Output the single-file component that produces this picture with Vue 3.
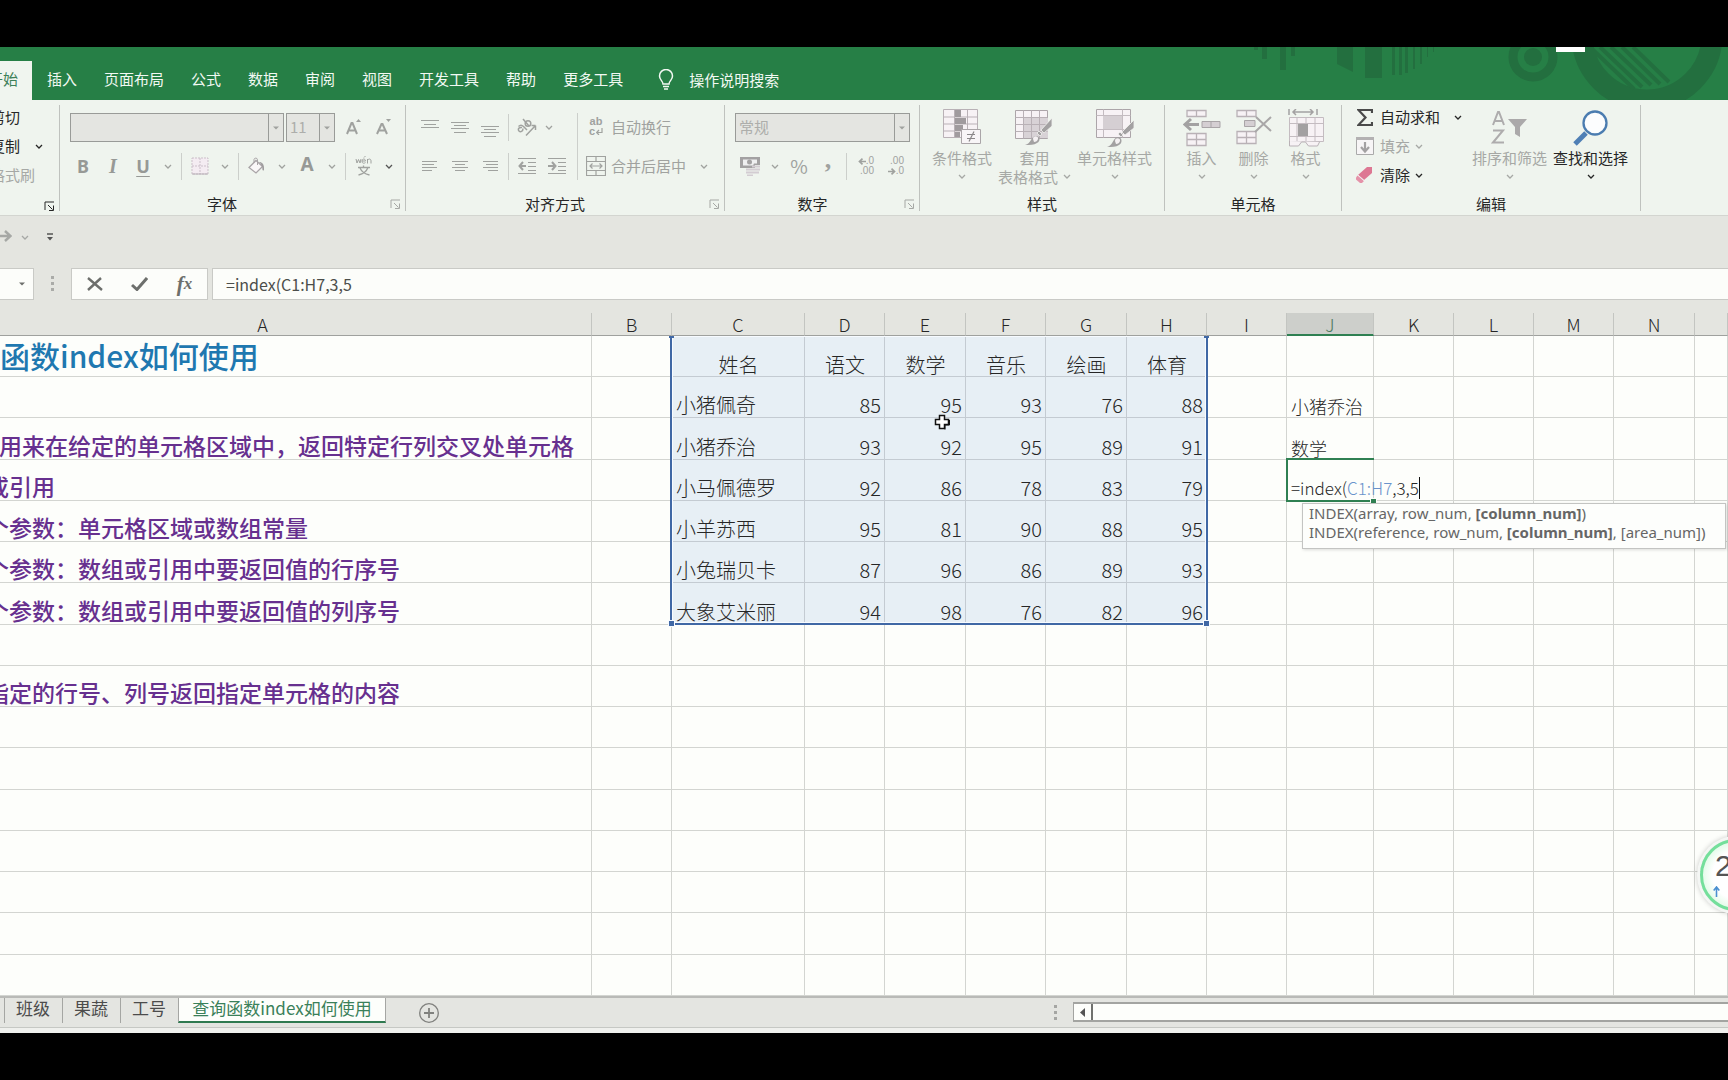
<script setup>
import { h } from 'vue'

const glyphs = {
  caret: [8, 5, '<path d="M1 1l3 3 3-3" fill="none" stroke="currentColor" stroke-width="1.3"/>'],
  drop: [6, 4, '<path d="M0 .5h6l-3 3z" fill="currentColor"/>'],
  launcher: [11, 10, '<path d="M1 9V1h9M4 4l4.500 4.500M9.500 4.500v5H5" fill="none" stroke="currentColor"/>'],
  bulb: [16, 22, '<path d="M5 15c0-3-3.500-4-3.500-8a6.500 6.500 0 0 1 13 0c0 4-3.500 5-3.500 8z" fill="none" stroke="currentColor" stroke-width="1.500"/><path d="M5 17.500h6M6 20h4" stroke="currentColor" stroke-width="1.500"/>'],
  grow: [16, 16, '<path d="M1 15L5.500 4h1L11 15M3 11.500h6" fill="none" stroke="currentColor" stroke-width="2"/><path d="M10 3l2.500-3L15 3z" fill="currentColor"/>'],
  shrink: [16, 16, '<path d="M1 15L5.500 5h1L11 15M3 11.500h6" fill="none" stroke="currentColor" stroke-width="2"/><path d="M10 0h5l-2.500 3z" fill="currentColor"/>'],
  border: [18, 18, '<path d="M1 1h16v16H1zM9 1v16M1 9h16" fill="#f4ecf2" stroke="#cbbfc9" stroke-dasharray="2 1"/><path d="M1 17h16" stroke="#b9b0b7"/>'],
  bucket: [18, 18, '<path d="M1 10.500L8 3.500l6.500 6L8 16z" fill="#faf7f8" stroke="#a9a4a7" stroke-width="1.300"/><path d="M6 6V2.500a1.800 1.800 0 0 1 3.500 0V8" fill="none" stroke="#a9a4a7"/><path d="M11 5c3 0 5.500 2 5 8-.5 1-1.500.6-1.600-.4.2-3-.8-5-3.400-7.600z" fill="#9f9c9e"/>'],
  wen: [18, 20, '<path d="M8.500 9.500v2M3 11.500h12M13 11.500c-1.500 4-5 6.500-9.500 7.500M5 12c1.500 3.500 5 6 9.500 7" fill="none" stroke="currentColor" stroke-width="1.300"/><path d="M1 3l1 4 1.500-3.500L5 7l1-4M7 5h3.500c0-2.600-3.500-2.600-3.500 0s2 2.600 3.500 1.600M9 1.500L10.500 0M12.500 7.500V3M12.500 4.500c1-2 3.500-2 3.500.500v2.500" fill="none" stroke="currentColor"/>'],
  top: [18, 20, '<path d="M0 3.500h18M3 7.500h12M0 10.500h18" stroke="currentColor"/>'],
  middle: [18, 20, '<path d="M0 5.500h18M3 8.500h12M0 11.500h18M3 15.500h12" stroke="currentColor"/>'],
  bottom: [18, 20, '<path d="M0 9.500h18M3 12.500h12M0 15.500h18M3 19.500h12" stroke="currentColor"/>'],
  left: [16, 12, '<path d="M0 1.500h15M0 4.500h12M0 7.500h15M0 10.500h10" stroke="currentColor"/>'],
  center: [16, 12, '<path d="M0 1.500h16M3 4.500h10M0 7.500h16M3 10.500h10" stroke="currentColor"/>'],
  right: [16, 12, '<path d="M1 1.500h15M4 4.500h12M1 7.500h15M6 10.500h10" stroke="currentColor"/>'],
  outdent: [18, 18, '<path d="M0 1.500h18M10 5.500h8M10 9.500h8M10 13.500h8M0 16.500h18" stroke="currentColor"/><path d="M8 9H2M5 5L1.500 9 5 13" fill="none" stroke="currentColor" stroke-width="2"/>'],
  indent: [18, 18, '<path d="M0 1.500h18M10 5.500h8M10 9.500h8M10 13.500h8M0 16.500h18" stroke="currentColor"/><path d="M0 9h6M4 5l3.500 4L4 13" fill="none" stroke="currentColor" stroke-width="2"/>'],
  merge: [20, 20, '<path d="M.5.5h19v19H.5zM.5 5.500h19M.5 14.500h19M10 .5v5M10 14.500v5M4 10h12M6.500 7.500L4 10l2.500 2.500M13.500 7.500L16 10l-2.500 2.500" fill="none" stroke="currentColor" stroke-width="1.200"/>'],
  slant: [20, 18, '<path d="M9 17.500L18 8M18.500 7.500h-4M18.500 7.500V12" fill="none" stroke="currentColor" stroke-width="1.500"/><g fill="none" stroke="currentColor" stroke-width="1.500"><path d="M1.500 8.500c2-2 3.500-1.500 5 0L10 12M5 9.500c-3-.5-4.500 1.500-3 3.500 1.500 1.500 4 .5 4-2.500"/><path d="M6 1l6 7"/><circle cx="11" cy="5.500" r="2.800"/></g>'],
  money: [20, 20, '<path d="M0 1h20v8h-5v3H0z" fill="#a3a1a2"/><path d="M3 3.500h14v4H14l-1 2H3z" fill="#efeff0"/><circle cx="9.500" cy="6" r="2.500" fill="#a3a1a2"/><path d="M12 10.500h8M12 13.500h8M6 13.500h7M6 16.500h7M12 16.500h7M7 19.500h6" stroke="#d3ccd2" stroke-width="2"/>'],
  wrap: [7, 7, '<path d="M6 0v4.500H1M3 2L.7 4.500 3 7" fill="none" stroke="currentColor" stroke-width="1.200"/>'],
  toleft: [8, 7, '<path d="M8 3.500H2M4.500.7L1.500 3.500l3 2.800" fill="none" stroke="currentColor" stroke-width="1.700"/>'],
  toright: [8, 7, '<path d="M0 3.500h6M3.500.7l3 2.800-3 2.800" fill="none" stroke="currentColor" stroke-width="1.700"/>'],
  cond: [38, 38, '<path d="M.5.5h34v28H.5z" fill="#f7f2f5" stroke="#b9b1b6"/><path d="M11.500.5v28M24.500.5v28M.5 8h34M.5 15h34M.5 22h34" stroke="#b9b1b6"/><path d="M12 1h6v7h-6zM12 9h11v6H12zM12 16h8v6h-8zM12 23h5v5h-5z" fill="#a09b9e"/><path d="M18.500 20.500h19v14h-19z" fill="#f8f5f7" stroke="#aaa5a8"/><path d="M24 25.500h8M24 29.500h8M31 22.500l-5 10" stroke="#8b888a" stroke-width="1.200"/>'],
  tablefmt: [38, 38, '<path d="M.5 1.500h32v28H.5z" fill="#f7f2f5" stroke="#aca5a9"/><path d="M9 9h24v20H9z" fill="#d8d2d6"/><path d="M8.500 1.500v28M16.500 1.500v28M24.500 1.500v28M.5 8.500h32M.5 15.500h32M.5 22.500h32" stroke="#b9b1b6"/><path d="M37 9v8l-8 7-3-3zM24 22l3 3-2 2-3-3z" fill="#a3a1a2" stroke="#f1f3ef" stroke-width=".8"/><path d="M10 36c6-1 6-9 11-9 4 0 5 5 1 7-3 2-7 2-12 2z" fill="#a3a1a2"/><path d="M18 30c0-4 6-3 5 0-.5 2-2 3-4 3z" fill="#f4f0f2"/>'],
  cellstyle: [38, 38, '<path d="M.5.5h34v28H.5z" fill="#f7f2f5" stroke="#aca5a9"/><path d="M7.500.5v28M26.500.5v28M.5 6.500h34M.5 20.500h34" stroke="#c4bcc1"/><path d="M7 7h19v13H7z" fill="#d5cfd3"/><path d="M38 11v8l-9 7-3-3zM24 23l3 3-2 2-3-3z" fill="#a3a1a2" stroke="#f1f3ef" stroke-width=".8"/><path d="M11 38c6-1 6-10 11-10 4 0 5 6 1 8-3 2-7 2-12 2z" fill="#a3a1a2"/><path d="M19 32c0-4 6-3 5 0-.5 2-2 3-4 3z" fill="#f4f0f2"/>'],
  insert: [38, 38, '<path d="M4 1.500h19v6H4zM13.500 1.500v6M4 24.500h19v12H4zM13.500 24.500v12M4 30.500h19" fill="#f7f2f5" stroke="#b9b1b6" stroke-width="1.300"/><path d="M19 12.500h18v6H19zM28 12.500v6" fill="#d5cfd3" stroke="#a9a4a7"/><path d="M16 15.500H3M8 10l-6 5.500L8 21" fill="none" stroke="#a3a1a2" stroke-width="3"/>'],
  remove: [38, 38, '<path d="M2 1.500h19v6H2zM11.500 1.500v6M2 22.500h19v12H2zM11.500 22.500v12M2 28.500h19" fill="#f7f2f5" stroke="#b9b1b6" stroke-width="1.300"/><path d="M9.500 11.500H20v6H9.500z" fill="#d5cfd3" stroke="#a9a4a7"/><path d="M21 8l15 14M36 8L20 23" fill="none" stroke="#a9a7a8" stroke-width="2"/>'],
  format: [38, 38, '<path d="M2 0v6M30 0v6M6 3h20M9 0L6 3l3 3M23 0l3 3-3 3" fill="none" stroke="#a3a1a2" stroke-width="1.500"/><path d="M2.500 8.500h34v24h-34zM10 8.500v24M28 8.500v24M2.500 14.500h34M2.500 27.500h34M19 8.500v24" fill="#f7f2f5" stroke="#c4bcc1"/><path d="M11 15h10v12H11z" fill="#a3a1a2"/><path d="M2.500 32v5h9l3-4h4l3 4h9l2-4" fill="#f7f2f5" stroke="#b9b1b6"/>'],
  sum: [16, 17, '<path d="M15 4V1H1.500L8.500 8.500 1.500 16H15v-3" fill="none" stroke="currentColor" stroke-width="2.200"/>'],
  fill: [18, 18, '<path d="M.5.5h17v17H.5z" fill="#f7f5f6" stroke="#aaa"/><path d="M0 0h18v3H0z" fill="#b3b1b2"/><path d="M9 5v9M5 10l4 4.500 4-4.500" fill="none" stroke="#a3a1a2" stroke-width="2.200"/>'],
  eraser: [18, 16, '<path d="M11 0h5v6L8 13 2 8z" fill="#dd7793"/><path d="M1.500 8.500L8 14l-2 2H4l-4-3.500v-2z" fill="#e592a9"/><path d="M2 8l6 5.500" stroke="#f5e9ec"/>'],
  sort: [38, 34, '<path d="M2 14L7 1h1l5 13M4 10h7M2 19.500h10L2 31.500h11" fill="none" stroke="#aeacad" stroke-width="2"/><path d="M17 8h19l-7 8v10l-5-3v-7z" fill="#aba9aa"/>'],
  find: [36, 36, '<path d="M13 23L2 34" stroke="#4f7fb5" stroke-width="5"/><circle cx="22" cy="13" r="11.500" fill="#fcfdfe" stroke="#4b7cb0" stroke-width="2.300"/>'],
  redo: [12, 14, '<path d="M0 6h9M5 1l5.500 5L5 11" fill="none" stroke="currentColor" stroke-width="2.500"/>'],
  custom: [6, 8, '<path d="M0 1h6" stroke="currentColor" stroke-width="1.500"/><path d="M0 4h6L3 7.500z" fill="currentColor"/>'],
  grip: [4, 16, '<path d="M0 0h3v3H0zM0 6h3v3H0zM0 12h3v3H0z" fill="currentColor"/>'],
  cancel: [16, 14, '<path d="M1 1l14 12M14 1L1 13" stroke="currentColor" stroke-width="2.400"/>'],
  enter: [17, 14, '<path d="M1 8l5 4.500L16 1" fill="none" stroke="currentColor" stroke-width="3"/>'],
  add: [20, 20, '<circle cx="10" cy="10" r="9.300" fill="none" stroke="currentColor" stroke-width="1.300"/><path d="M10 5v10M5 10h10" stroke="currentColor" stroke-width="1.800"/>'],
  back: [5, 9, '<path d="M5 0v9L0 4.500z" fill="currentColor"/>'],
  pointer: [16, 16, '<path d="M5.500 1.500h5v4h4v5h-4v4h-5v-4h-4v-5h4z" fill="#fff" stroke="#111" stroke-width="1.500"/><path d="M11 15.500v-4.500h4.500V6" fill="none" stroke="#111"/>'],
  up: [7, 11, '<path d="M3.500 11V2M.7 4.500L3.500 1l2.800 3.500" fill="none" stroke="currentColor" stroke-width="1.600"/>'],
}

const Icon = ({ name }) => {
  const [w, ht, body] = glyphs[name]
  return h('svg', { width: w, height: ht, viewBox: `0 0 ${w} ${ht}`, 'aria-hidden': 'true', innerHTML: body })
}
Icon.props = ['name']

const tabs = ['插入', '页面布局', '公式', '数据', '审阅', '视图', '开发工具', '帮助', '更多工具']
const columns = ['A', 'B', 'C', 'D', 'E', 'F', 'G', 'H', 'I', 'J', 'K', 'L', 'M', 'N', '']

const notes = {
  1: ['title', '函数index如何使用'],
  3: ['note', '用来在给定的单元格区域中，返回特定行列交叉处单元格'],
  4: ['note cut', '或引用'],
  5: ['note cut', '个参数：单元格区域或数组常量'],
  6: ['note cut', '个参数：数组或引用中要返回值的行序号'],
  7: ['note cut', '个参数：数组或引用中要返回值的列序号'],
  9: ['note cut', '指定的行号、列号返回指定单元格的内容'],
}
const scores = [
  ['姓名', '语文', '数学', '音乐', '绘画', '体育'],
  ['小猪佩奇', 85, 95, 93, 76, 88],
  ['小猪乔治', 93, 92, 95, 89, 91],
  ['小马佩德罗', 92, 86, 78, 83, 79],
  ['小羊苏西', 95, 81, 90, 88, 95],
  ['小兔瑞贝卡', 87, 96, 86, 89, 93],
  ['大象艾米丽', 94, 98, 76, 82, 96],
]
const lookups = { 2: '小猪乔治', 3: '数学' }

const cell = (row, col) => {
  if (col === 0) return notes[row]?.[1] ?? ''
  if (col >= 2 && col <= 7) return scores[row - 1]?.[col - 2] ?? ''
  if (col === 9) return lookups[row] ?? ''
  return ''
}
const cellClass = (row, col) => [
  col === 0 && notes[row]?.[0],
  col >= 2 && col <= 7 && row <= 7 && 'picked',
  row === 1 && col > 0 && 'mid',
  row > 1 && col > 2 && col < 8 && 'num',
  col === 9 && 'lookup',
]
</script>

<template>
  <div class="screen">
    <header class="banner">
      <svg class="decor" width="488" height="53" viewBox="0 0 488 53" aria-hidden="true">
        <g fill="#236f3f">
          <path d="M14 0h4v3h-4zM22 0h5v12h-5zM40 0h6v23h-6zM51 0h4v9h-4zM97 0h16v25l-16-8zM125 0h17v31h-17z" />
          <path d="M152 0h3v28h-3zM159 0h3v28h-3zM165 0h3v26h-3zM173 0h2v22h-2zM180 0h2v17h-2zM187 0h1v10h-1zM193 0h1v5h-1z" />
          <circle cx="293" cy="10" r="9" />
        </g>
        <g fill="none" stroke="#236f3f">
          <circle cx="293" cy="10" r="20" stroke-width="9" />
          <circle cx="407" cy="-12" r="65" stroke-width="21" />
          <path d="M350 0l44 42M360 0l42 40M371 0l40 38M382 0l38 37M393 0l36 35" stroke-width="4" />
        </g>
        <path d="M316 0h29v5h-29z" fill="#fff" />
      </svg>
      <nav class="tabs">
        <a class="tab on" href="#">开始</a>
        <a v-for="t in tabs" :key="t" class="tab" href="#">{{ t }}</a>
        <a class="tell" href="#"><Icon name="bulb" />操作说明搜索</a>
      </nav>
    </header>

    <section class="ribbon">
      <div class="group clip">
        <div class="stack">
          <button>剪切</button>
          <button>复制<Icon name="caret" /></button>
          <button class="off">格式刷</button>
        </div>
        <footer class="foot"><span></span><Icon name="launcher" /></footer>
      </div>

      <div class="group font">
        <div class="row">
          <label class="combo wide"><select aria-label="字体"><option></option></select><Icon name="drop" /></label>
          <label class="combo small"><select aria-label="字号"><option>11</option></select><Icon name="drop" /></label>
          <button class="slot" aria-label="增大字号"><Icon name="grow" /></button>
          <button class="slot" aria-label="减小字号"><Icon name="shrink" /></button>
        </div>
        <div class="row">
          <button class="slot bold">B</button>
          <button class="slot bold italic">I</button>
          <button class="slot bold under">U</button>
          <button class="arrow" aria-label="下划线"><Icon name="caret" /></button>
          <i class="rule"></i>
          <button class="slot" aria-label="边框"><Icon name="border" /></button>
          <button class="arrow" aria-label="边框选项"><Icon name="caret" /></button>
          <i class="rule"></i>
          <button class="slot" aria-label="填充颜色"><Icon name="bucket" /></button>
          <button class="arrow" aria-label="填充颜色选项"><Icon name="caret" /></button>
          <button class="slot bold raise">A</button>
          <button class="arrow" aria-label="字体颜色选项"><Icon name="caret" /></button>
          <i class="rule"></i>
          <button class="slot" aria-label="拼音"><Icon name="wen" /></button>
          <button class="arrow live" aria-label="拼音选项"><Icon name="caret" /></button>
        </div>
        <footer class="foot off"><span>字体</span><Icon name="launcher" /></footer>
      </div>

      <div class="group align">
        <div class="halves">
          <div class="left-half">
            <div class="row">
              <button class="slot" aria-label="顶端对齐"><Icon name="top" /></button>
              <button class="slot" aria-label="垂直居中"><Icon name="middle" /></button>
              <button class="slot" aria-label="底端对齐"><Icon name="bottom" /></button>
              <i class="rule"></i>
              <button class="slot" aria-label="方向"><Icon name="slant" /></button>
              <button class="arrow thin" aria-label="方向选项"><Icon name="caret" /></button>
            </div>
            <div class="row">
              <button class="slot" aria-label="左对齐"><Icon name="left" /></button>
              <button class="slot" aria-label="居中"><Icon name="center" /></button>
              <button class="slot" aria-label="右对齐"><Icon name="right" /></button>
              <i class="rule"></i>
              <button class="slot" aria-label="减少缩进"><Icon name="outdent" /></button>
              <button class="slot" aria-label="增加缩进"><Icon name="indent" /></button>
            </div>
          </div>
          <div class="right-half">
            <div class="row"><button class="wide-btn"><span class="abc"><span>ab</span><span>c<Icon name="wrap" /></span></span>自动换行</button></div>
            <div class="row">
              <button class="wide-btn"><Icon name="merge" />合并后居中</button>
              <button class="arrow far" aria-label="合并选项"><Icon name="caret" /></button>
            </div>
          </div>
        </div>
        <footer class="foot off"><span>对齐方式</span><Icon name="launcher" /></footer>
      </div>

      <div class="group number">
        <div class="row">
          <label class="combo full"><select aria-label="数字格式"><option>常规</option></select><Icon name="drop" /></label>
        </div>
        <div class="row">
          <button class="slot" aria-label="会计数字格式"><Icon name="money" /></button>
          <button class="arrow" aria-label="会计选项"><Icon name="caret" /></button>
          <button class="slot pct">%</button>
          <button class="slot comma">,</button>
          <i class="rule"></i>
          <button class="slot dec"><span><Icon name="toleft" />.0</span><span>.00</span></button>
          <button class="slot dec"><span>.00</span><span><Icon name="toright" />.0</span></button>
        </div>
        <footer class="foot off"><span>数字</span><Icon name="launcher" /></footer>
      </div>

      <div class="group style">
        <div class="bigs">
          <button class="big off"><Icon name="cond" /><span>条件格式</span><Icon name="caret" /></button>
          <button class="big off"><Icon name="tablefmt" /><span>套用</span><span class="pair">表格格式<Icon name="caret" /></span></button>
          <button class="big off"><Icon name="cellstyle" /><span>单元格样式</span><Icon name="caret" /></button>
        </div>
        <footer class="foot"><span>样式</span></footer>
      </div>

      <div class="group cells">
        <div class="bigs">
          <button class="big off"><Icon name="insert" /><span>插入</span><Icon name="caret" /></button>
          <button class="big off"><Icon name="remove" /><span>删除</span><Icon name="caret" /></button>
          <button class="big off"><Icon name="format" /><span>格式</span><Icon name="caret" /></button>
        </div>
        <footer class="foot"><span>单元格</span></footer>
      </div>

      <div class="group edit">
        <div class="bigs">
          <div class="stack">
            <button><span class="ico"><Icon name="sum" /></span>自动求和<Icon name="caret" class="spaced" /></button>
            <button class="off"><span class="ico"><Icon name="fill" /></span>填充<Icon name="caret" class="near" /></button>
            <button><span class="ico"><Icon name="eraser" /></span>清除<Icon name="caret" class="near" /></button>
          </div>
          <button class="big off"><Icon name="sort" /><span>排序和筛选</span><Icon name="caret" /></button>
          <button class="big"><Icon name="find" /><span>查找和选择</span><Icon name="caret" /></button>
        </div>
        <footer class="foot"><span>编辑</span></footer>
      </div>
    </section>

    <div class="quick">
      <button class="off" aria-label="恢复"><Icon name="redo" /></button>
      <button class="off" aria-label="恢复选项"><Icon name="caret" /></button>
      <button aria-label="自定义快速访问工具栏"><Icon name="custom" /></button>
    </div>

    <div class="formula-bar">
      <button class="name-box" aria-label="名称框"><Icon name="drop" /></button>
      <span class="grip"><Icon name="grip" /></span>
      <div class="tools">
        <button aria-label="取消"><Icon name="cancel" /></button>
        <button aria-label="输入"><Icon name="enter" /></button>
        <button class="fx">f<sub>x</sub></button>
      </div>
      <input class="formula" aria-label="编辑栏" value="=index(C1:H7,3,5" />
    </div>

    <main class="sheet">
      <table>
        <colgroup>
          <col v-for="(c, i) in columns" :key="i" :class="'col-' + (c || 'rest')" />
        </colgroup>
        <thead>
          <tr><th v-for="(c, i) in columns" :key="i" :class="{ on: c === 'J' }">{{ c }}</th></tr>
        </thead>
        <tbody>
          <tr v-for="r in 16" :key="r">
            <td v-for="(c, i) in columns" :key="i" :class="cellClass(r, i)">
              <template v-if="r === 4 && c === 'J'">
                <div class="editing">=index(<b>C1:H7</b>,3,5<i class="beam"></i></div>
              </template>
              <template v-else>{{ cell(r, i) }}</template>
            </td>
          </tr>
        </tbody>
      </table>
      <div class="range"><i></i><i></i><i></i><i></i></div>
      <div class="active-cell"><i></i></div>
      <div class="hint">
        <div>INDEX(array, row_num, <b>[column_num]</b>)</div>
        <div>INDEX(reference, row_num, <b>[column_num]</b>, [area_num])</div>
      </div>
      <Icon name="pointer" class="pointer" />
      <div class="bubble"><span>2</span><Icon name="up" /></div>
    </main>

    <div class="sheet-bar">
      <a class="sheet-tab" href="#">班级</a>
      <a class="sheet-tab" href="#">果蔬</a>
      <a class="sheet-tab" href="#">工号</a>
      <a class="sheet-tab on" href="#">查询函数index如何使用</a>
      <button class="add" aria-label="新工作表"><Icon name="add" /></button>
      <span class="grip"><Icon name="grip" /></span>
      <div class="scroll"><button aria-label="向左滚动"><Icon name="back" /></button></div>
    </div>
    <div class="status"></div>
  </div>
</template>

<style>
body { margin: 0; background: #000; }
</style>

<style scoped>
.screen {
  box-sizing: border-box;
  display: flex;
  flex-direction: column;
  height: 100vh;
  padding: 47px 0;
  overflow: hidden;
  background: #000;
  color: #262626;
  font: 15px/20px "Noto Sans CJK SC", sans-serif;
}
button { display: flex; align-items: center; justify-content: center; padding: 0; border: 0; background: none; color: inherit; font: inherit; white-space: nowrap; }
a { color: inherit; text-decoration: none; }
svg { flex: none; display: block; }

.banner { position: relative; flex: none; height: 53px; background: #267f46; color: #f2f9f3; }
.decor { position: absolute; top: 0; right: 0; }
.tabs { position: relative; display: flex; gap: 27px; padding-top: 14px; line-height: 35px; white-space: nowrap; }
.tab.on { box-sizing: border-box; width: 32px; height: 39px; padding-right: 14px; margin-right: -12px; display: flex; justify-content: flex-end; overflow: hidden; background: #f0f5ef; color: #3d8058; }
.tell { display: flex; align-items: center; gap: 15px; height: 37px; margin-left: 8px; }

.ribbon { flex: none; display: flex; height: 115px; background: #eff4ee; border-bottom: 1px solid #d3d5d0; }
.group { box-sizing: border-box; display: flex; flex-direction: column; height: 106px; margin-top: 5px; padding-top: 8px; border-right: 1px solid #bfc2be; }
.foot { display: flex; align-items: center; justify-content: center; margin-top: auto; line-height: 14px; }
.foot span { flex: 1; text-align: center; color: #262626; }
.foot svg { margin: 0 4px 0 5px; }
.off { color: #a6a8a5; }
.clip { width: 60px; }
.font { width: 346px; padding-left: 8px; }
.align { width: 319px; padding-left: 9px; }
.number { width: 195px; padding-left: 10px; }
.style { width: 245px; }
.cells { width: 177px; }
.edit { width: 299px; }
.font .foot, .align .foot, .number .foot { margin-left: -9px; }

.row { display: flex; align-items: center; height: 28px; margin-bottom: 11px; color: #a0a29f; }
.slot { width: 30px; height: 28px; }
.arrow { width: 20px; height: 28px; }
.arrow.thin { width: 14px; }
.arrow.far { margin-left: 8px; }
.arrow.live { color: #555; }
.rule { width: 1px; height: 27px; margin: 0 3px; background: #cccfcb; }
.bold { font: bold 18px/20px "Noto Sans", sans-serif; color: #979996; }
.italic { font-family: "Liberation Serif", serif; font-style: italic; font-size: 20px; }
.under { text-decoration: underline; text-decoration-thickness: 1px; text-underline-offset: 3px; }
.raise { padding-bottom: 4px; font-size: 19px; }
.pct { width: 28px; font-size: 19px; }
.comma { padding-bottom: 12px; font: bold 26px/20px "Liberation Serif", serif; }
.dec { flex-direction: column; font: 10px/10px "Liberation Sans", sans-serif; }
.dec span { display: flex; align-items: center; justify-content: flex-end; width: 18px; }

.combo { position: relative; display: block; }
.combo select { box-sizing: border-box; width: 100%; height: 29px; padding: 0 3px; border: 1px solid #999b98; border-radius: 0; background: #e4e5e1; appearance: none; color: #adaeab; font: inherit; opacity: 1; }
.combo::after { content: ""; position: absolute; top: 0; right: 15px; width: 1px; height: 29px; background: #999b98; }
.combo svg { position: absolute; top: 13px; right: 5px; }
.wide { width: 214px; margin: 0 2px; }
.small { width: 49px; margin-right: 4px; }
.full { width: 175px; }

.halves { display: flex; }
.left-half { width: 162px; }
.left-half .row:last-child { margin-bottom: 0; }
.right-half { padding-left: 8px; border-left: 1px solid #cccfcb; }
.right-half .row:last-child { margin-bottom: 0; }
.wide-btn { gap: 5px; }
.abc { display: flex; flex-direction: column; width: 20px; padding-bottom: 2px; font: bold 11px/10px "Liberation Sans", sans-serif; }
.abc span { display: flex; align-items: center; justify-content: center; gap: 1px; }

.bigs { display: flex; justify-content: center; margin-top: -4px; }
.big { flex-direction: column; justify-content: flex-start; line-height: 19px; padding: 0 3px; }
.big > svg:first-child { height: 38px; margin-bottom: 1px; }
.big > svg:last-child { margin-top: 7px; }
.pair { display: flex; align-items: center; gap: 5px; }
.cells .bigs { padding-left: 1px; }
.cells .big { width: 52px; padding: 0; }
.edit .bigs { justify-content: flex-start; }
.edit .big { width: 81px; padding: 0; }
.stack { display: flex; flex-direction: column; align-items: flex-start; gap: 9px; }
.stack button { height: 20px; }
.clip .stack { margin: -6px 0 0 -10px; }
.clip .stack svg { margin-left: 15px; }
.edit .stack { width: 115px; margin-top: -2px; padding-left: 12px; }
.ico { display: flex; justify-content: center; width: 22px; margin-right: 4px; color: #4a4a4a; }
.near { margin-left: 5px; }
.spaced { margin-left: 14px; }

.quick { flex: none; display: flex; align-items: center; gap: 9px; height: 42px; padding-bottom: 10px; background: #e4e5e0; color: #555; }
.quick button:nth-child(3) { margin-left: 9px; }
.formula-bar { flex: none; display: flex; height: 32px; padding-bottom: 13px; background: #e4e5e0; color: #6d6f6c; }
.name-box { box-sizing: border-box; width: 34px; justify-content: flex-end; padding-right: 8px; border: 1px solid #c9cac6; border-left: 0; background: #fcfdfa; color: #6d6f6c; }
.formula-bar .grip { display: flex; align-items: center; justify-content: center; width: 37px; color: #aaaba8; }
.tools { box-sizing: border-box; display: flex; align-items: center; width: 137px; border: 1px solid #c9cac6; background: #fcfdfa; }
.tools button { width: 45px; }
.fx { font: italic bold 21px/24px "Liberation Serif", serif; }
.fx sub { font-size: 17px; line-height: 10px; vertical-align: -2px; }
.formula { box-sizing: border-box; flex: 1; min-width: 0; margin-left: 4px; padding: 0 13px 1px; border: 1px solid #c9cac6; border-right: 0; border-radius: 0; background: #fcfdfa; color: #4c4e4b; font: 16px/24px "Noto Sans CJK SC", sans-serif; }

.sheet { position: relative; flex: 1; min-height: 0; overflow: hidden; background: #fdfefb; }
table { width: 100%; table-layout: fixed; border-collapse: separate; border-spacing: 0; }
.col-A { width: 592px; }
.col-B, .col-D, .col-F, .col-H, .col-I, .col-K, .col-L, .col-M { width: 80px; }
.col-C { width: 133px; }
.col-E, .col-G, .col-N { width: 81px; }
.col-J { width: 87px; }
th { box-sizing: border-box; height: 23px; padding: 0; border-right: 1px solid #c3c5c1; border-bottom: 1px solid #9fa19e; background: #e4e5e0; font-weight: 300; font-size: 18px; line-height: 20px; }
th:first-child { padding-right: 66px; }
th.on { border-bottom: 2px solid #2f8052; background: #cdcfcb; color: #4b7a5e; }
td { box-sizing: border-box; height: 41px; padding: 0 3px 1px; border-right: 1px solid #d3d5d1; border-bottom: 1px solid #d3d5d1; vertical-align: bottom; font-weight: 300; font-size: 20px; line-height: 22px; white-space: nowrap; }
tr:nth-child(4n + 3) td { height: 42px; }
.picked { padding-left: 4px; background: #e7eff5; border-color: #c4cbd2; }
.mid { padding-bottom: 0; text-align: center; }
.num { text-align: right; }
.title { padding: 0 0 6px; color: #1f78b0; font-weight: 500; font-size: 30px; line-height: 30px; }
.note { padding: 0 0 2px; color: #67308f; font-weight: 500; font-size: 23px; line-height: 24px; text-indent: -1px; }
.cut { text-indent: -14px; }
.lookup { padding-left: 4px; font-size: 18px; line-height: 20px; }
.editing { display: flex; align-items: center; width: 160px; font-size: 17px; line-height: 22px; }
.editing b { color: #6a93cb; font-weight: inherit; }
.beam { width: 1px; height: 22px; background: #111; }

.range { position: absolute; top: 23px; left: 670px; box-sizing: border-box; width: 538px; height: 289px; border: 2px solid #4068a5; border-top: 0; box-shadow: inset 0 0 0 1px #f7fbff; pointer-events: none; }
.range i { position: absolute; width: 5px; height: 5px; background: #4068a5; outline: 1px solid #f7fbff; }
.range i:nth-child(-n + 2) { top: 0; height: 2px; outline-width: 0; }
.range i:nth-child(n + 3) { bottom: -3px; }
.range i:nth-child(odd) { left: -3px; }
.range i:nth-child(even) { right: -3px; }
.active-cell { position: absolute; top: 145px; left: 1286px; box-sizing: border-box; width: 88px; height: 44px; border: 2px solid #2f8052; border-right: 0; pointer-events: none; }
.active-cell i { position: absolute; right: -2px; bottom: -3px; width: 5px; height: 4px; background: #2f8052; outline: 1px solid #fdfefb; }
.hint { position: absolute; top: 190px; left: 1302px; box-sizing: border-box; width: 424px; padding: 0 6px 6px; border: 1px solid #c3c4c2; background: #fdfefc; box-shadow: 1px 1px 3px #0002; color: #666; font: 15px/19px "Noto Sans", sans-serif; white-space: nowrap; }
.pointer { position: absolute; top: 101px; left: 934px; }
.bubble { position: absolute; top: 526px; left: 1700px; box-sizing: border-box; width: 72px; height: 72px; padding: 9px 0 0 12px; border: 3px solid #74df9b; border-radius: 50%; background: radial-gradient(#fff 50%, #c0f6cd); box-shadow: 0 0 0 3px #f4f6f4, 0 0 5px 3px #0003; color: #555; font: 30px/30px "Liberation Sans", sans-serif; }
.bubble svg { margin-top: 5px; margin-left: -2px; color: #4a8fd0; }

.sheet-bar { flex: none; box-sizing: border-box; display: flex; height: 32px; padding-left: 4px; border-top: 2px solid #b9bab7; border-bottom: 1px solid #c6c8c4; background: #e4e5e1; color: #4c4c4c; font-size: 17px; line-height: 20px; white-space: nowrap; }
.sheet-tab { height: 25px; padding: 0 12px 0 11px; border-left: 1px solid #a5a6a3; }
.sheet-tab.on { box-sizing: border-box; width: 208px; padding: 0; text-align: center; border-right: 1px solid #a5a6a3; border-bottom: 2px solid #2f7a50; background: #fdfefb; color: #3a8059; }
.add { width: 20px; margin-left: 33px; color: #80817e; }
.sheet-bar .grip { display: flex; align-items: center; margin-left: auto; color: #a5a6a3; }
.scroll { box-sizing: border-box; flex: none; width: 655px; height: 20px; margin: 4px 0 0 15px; border: 2px solid #a3a4a1; border-width: 2px 0 2px 1px; background: #fdfefb; }
.scroll button { width: 19px; height: 16px; border-right: 2px solid #70716e; color: #555; }
.status { flex: none; height: 5px; background: #eff0ed; }
</style>
